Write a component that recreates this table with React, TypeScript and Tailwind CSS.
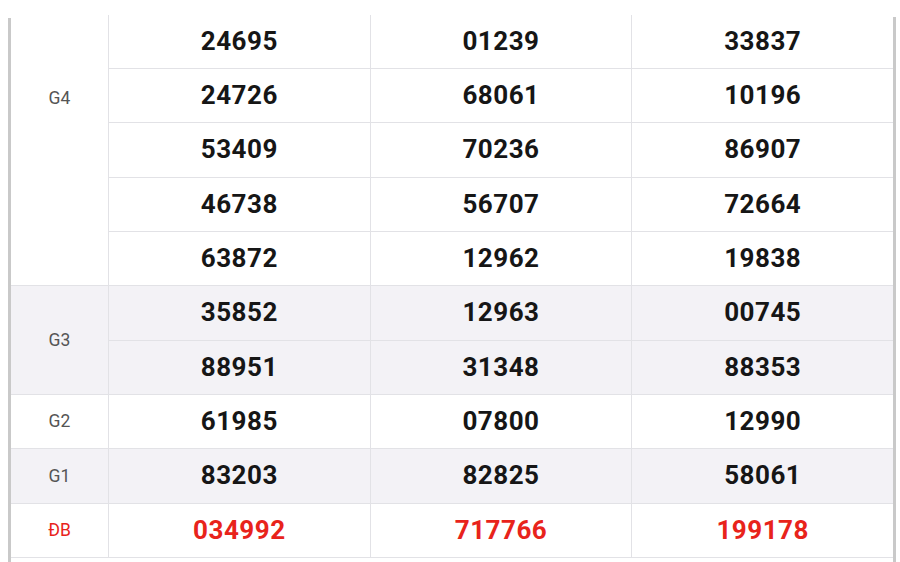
import React from "react";

const rows: { label: string; shade: boolean; red?: boolean; labelTop?: boolean; lines: string[][] }[] = [
  {
    label: "G4",
    shade: false,
    labelTop: true,
    lines: [
      ["24695", "01239", "33837"],
      ["24726", "68061", "10196"],
      ["53409", "70236", "86907"],
      ["46738", "56707", "72664"],
      ["63872", "12962", "19838"],
    ],
  },
  {
    label: "G3",
    shade: true,
    lines: [
      ["35852", "12963", "00745"],
      ["88951", "31348", "88353"],
    ],
  },
  { label: "G2", shade: false, lines: [["61985", "07800", "12990"]] },
  { label: "G1", shade: true, lines: [["83203", "82825", "58061"]] },
  { label: "ĐB", shade: false, red: true, lines: [["034992", "717766", "199178"]] },
];

export default function App() {
  return (
    <div
      className="w-[900px] h-[562px] overflow-hidden bg-white pt-[14.6px]"
      style={{ fontFamily: "Roboto, 'Liberation Sans', sans-serif" }}
    >
      <div className="relative ml-[11px] w-[882px]">
        <div className="absolute left-[-3px] top-[3px] w-[3px] h-[600px] bg-[#c9c9c9]" />
        <div className="absolute right-[-3px] top-[2px] w-[3px] h-[600px] bg-[#c9c9c9]" />
        {rows.map((g) => (
          <div key={g.label} className={`flex border-b border-[#e2e2e6] ${g.shade ? "bg-[#f3f2f6]" : "bg-white"}`}>
            <div
              className={`w-[98px] shrink-0 flex justify-center border-r border-[#e2e2e6] text-[17.5px] ${
                g.labelTop ? "items-start pt-[70px]" : "items-center"
              } ${g.red ? "text-[#e8231b]" : "text-[#555555]"}`}
            >
              {g.label}
            </div>
            <div className="flex-1 flex flex-col">
              {g.lines.map((line, i) => {
                const last = i === g.lines.length - 1;
                return (
                  <div
                    key={i}
                    className={last ? "flex h-[53.33px]" : "flex h-[54.33px] border-b border-[#e2e2e6]"}
                  >
                    {line.map((n, j) => (
                      <div
                        key={j}
                        className={`flex-1 flex items-center justify-center text-[26px] font-bold tracking-[0.5px] ${
                          j < 2 ? "border-r border-[#e2e2e6]" : ""
                        } ${g.red ? "text-[#e8231b]" : "text-[#161616]"}`}
                      >
                        {n}
                      </div>
                    ))}
                  </div>
                );
              })}
            </div>
          </div>
        ))}
      </div>
    </div>
  );
}
